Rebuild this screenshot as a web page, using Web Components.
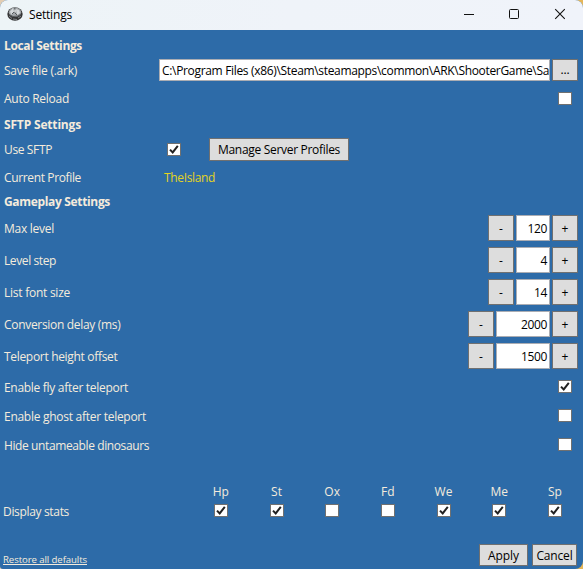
<!DOCTYPE html>
<html lang="en">
<head>
<meta charset="utf-8">
<title>Settings</title>
<style>
html,body{margin:0;height:100%;overflow:hidden}
body{background:linear-gradient(90deg,#e3cdb2 0 50%,#e6b657 50%);font:12px/16px "Open Sans","Noto Sans",sans-serif}
</style>
</head>
<body>
<settings-window></settings-window>
<script>
const define = (name, html, setup) => customElements.define(name, class extends HTMLElement {
  connectedCallback() {
    if (this.shadowRoot) return;
    this.attachShadow({mode: 'open'}).innerHTML = html;
    if (setup) setup(this, this.shadowRoot);
  }
});

/* One line of text; "w" is the advance width it is tracked to. */
define('ui-text', `<style>
:host{display:inline-block;white-space:nowrap;font-size:12px;line-height:16px;flex:none}
:host([bold]){font-weight:700}
:host([small]){font-size:9.6px;line-height:12px}
:host([small]) span{text-decoration:underline;text-underline-offset:1px}
span{display:inline-block}
</style><span><slot></slot></span>`, (el, root) => {
  const w = +el.getAttribute('w'), s = root.querySelector('span');
  if (w) s.style.letterSpacing = (w - s.getBoundingClientRect().width) / el.textContent.length + 'px';
});

define('ui-check', `<style>
:host{display:block;box-sizing:border-box;width:14px;height:13px;background:#fff;border:1px solid #707070;flex:none}
svg{display:none;width:12px;height:11px}
:host([checked]) svg{display:block}
</style><svg viewBox="0 0 12 11"><path d="M2 5.6 4.7 8.4 9.8 1.8" fill="none" stroke="#212121" stroke-width="2"/></svg>`);

define('ui-button', `<style>
:host{display:flex;box-sizing:border-box;height:22px;align-items:center;justify-content:center;background:#ddd;border:1px solid #707070;color:#000;flex:none}
:host([step]){width:26px;height:26px}
</style><slot></slot>`);

define('ui-field', `<style>
:host{display:flex;box-sizing:border-box;align-items:center;background:#fff;border:1px solid #abadb3;color:#000;overflow:hidden;height:26px;flex:none}
:host([number]){justify-content:flex-end;padding-right:2px}
</style><slot></slot>`);

define('ui-stepper', `<style>
:host{display:flex;gap:2px}
ui-button,ui-field{padding-top:2px}
</style><ui-button step><ui-text>-</ui-text></ui-button><ui-field number><ui-text></ui-text></ui-field><ui-button step><ui-text>+</ui-text></ui-button>`, (el, root) => {
  const f = root.querySelector('ui-field'), old = f.querySelector('ui-text'), t = document.createElement('ui-text');
  f.style.width = el.getAttribute('size') + 'px';
  t.textContent = el.getAttribute('value');
  t.setAttribute('w', t.textContent.length * 6.5);
  old.replaceWith(t);
});

define('setting-row', `<style>
:host{display:flex;align-items:center;box-sizing:border-box;padding:0 5px 0 4px;color:#f5ebdc}
.l{width:155px;flex:none;display:flex}
:host([low]) .l{padding-top:2px}
.c{flex:1;display:flex;align-items:center;min-width:0}
.e{display:flex;align-items:center;gap:2px}
</style><div class="l"><slot name="label"></slot></div><div class="c"><slot></slot></div><div class="e"><slot name="end"></slot></div>`);

define('stat-option', `<style>
:host{display:flex;flex-direction:column;align-items:center;gap:4px;color:#f5ebdc}
</style><ui-text></ui-text><ui-check></ui-check>`, (el, root) => {
  const t = document.createElement('ui-text');
  t.textContent = el.getAttribute('name');
  t.setAttribute('w', el.getAttribute('w'));
  root.querySelector('ui-text').replaceWith(t);
  root.querySelector('ui-check').toggleAttribute('checked', el.hasAttribute('checked'));
});

define('title-bar', `<style>
:host{display:flex;height:30px;background:linear-gradient(90deg,#edf4f7,#eff3f9 50%,#f0f3fa);color:#000;align-items:center;padding-left:7px}
.logo{width:16px;height:16px;margin:-2px 6px 0 0}
.buttons{display:flex;margin-left:auto;height:30px;padding-right:1px}
.buttons svg{width:45px;height:30px;display:block}
</style>
<svg class="logo" viewBox="0 0 16 16">
<ellipse cx="8" cy="8" rx="7.7" ry="6.7" fill="#343536"/>
<ellipse cx="8" cy="6.3" rx="6.2" ry="4.7" fill="#a4a8ab"/>
<path d="M3 5.5 6 2.3 7 6 4.2 8.7zM9 3l3 1 1 3-3 2z" fill="#d4d8da"/>
<path d="M7.8 2v5M5 8l2-2 3 3M2 8.5l4 2 5-.5 3-2" fill="none" stroke="#55595c"/>
<path d="M2 10l3 2.5M6 13l4 .5M11 12l3-2" stroke="#818486" fill="none"/>
<path d="M7.4 3.4h1.2v3H7.4z" fill="#f6f8f8"/>
</svg>
<ui-text w="43">Settings</ui-text>
<div class="buttons">
<svg viewBox="0 0 45 30"><path d="M17 14.5h10" stroke="#111"/></svg>
<svg viewBox="0 0 45 30"><rect x="17.5" y="9.5" width="9" height="9" rx="1" fill="none" stroke="#111"/></svg>
<svg viewBox="0 0 45 30"><path d="M18.2 9.2l9.6 9.6M27.8 9.2l-9.6 9.6" stroke="#111" stroke-width="1.1"/></svg>
</div>`);

define('settings-window', `<style>
:host{display:flex;flex-direction:column;box-sizing:border-box;width:583px;height:569px;background:#2d6ba8;border-radius:8px;overflow:hidden;border-bottom-left-radius:3px}
.rows{display:grid;grid-template-rows:29px 22px 35px 18px 31px 25px 22px repeat(5,32px) repeat(3,29px)}
.path{width:391px;height:22px;padding:2px 0 0 2px}
.use{margin-left:8px}
.manage{margin-left:28px;width:140px;height:23px}
.profile{margin-left:5px;color:#e4d322}
.lead{padding-top:3px}
.pad{margin-right:6px}
.flag{padding-top:2px}
.flag .pad{margin-top:-2px}
.stats{display:flex;justify-content:space-between;height:40px;margin-top:25px;padding:0 20px 0 3px;color:#f5ebdc}
.stats>ui-text{margin-top:20px}
.list{display:grid;grid-template-columns:repeat(7,55.7px);width:390px;margin-right:-20px}
.foot{display:flex;height:22px;margin-top:20px;padding:0 6px 0 3px;color:#f5ebdc}
.restore{margin:10px auto 0 0;height:12px;display:flex}
.foot ui-button+ui-button{margin-left:4px}
.foot ui-button{padding-top:1px}
</style>
<title-bar></title-bar>
<div class="rows">
<setting-row class="lead"><ui-text slot="label" bold w="78">Local Settings</ui-text></setting-row>
<setting-row low><ui-text slot="label" w="73">Save file (.ark)</ui-text><ui-field class="path"><ui-text w="387">C:\\Program Files (x86)\\Steam\\steamapps\\common\\ARK\\ShooterGame\\Sa</ui-text></ui-field><ui-button slot="end" style="width:26px"><ui-text w="9">...</ui-text></ui-button></setting-row>
<setting-row><ui-text slot="label" w="65">Auto Reload</ui-text><ui-check slot="end" class="pad"></ui-check></setting-row>
<setting-row><ui-text slot="label" bold w="77">SFTP Settings</ui-text></setting-row>
<setting-row><ui-text slot="label" w="48">Use SFTP</ui-text><ui-check class="use" checked></ui-check><ui-button class="manage"><ui-text w="122">Manage Server Profiles</ui-text></ui-button></setting-row>
<setting-row><ui-text slot="label" w="77">Current Profile</ui-text><ui-text class="profile" w="51">TheIsland</ui-text></setting-row>
<setting-row low><ui-text slot="label" bold w="106">Gameplay Settings</ui-text></setting-row>
<setting-row low><ui-text slot="label" w="50">Max level</ui-text><ui-stepper slot="end" value="120" size="34"></ui-stepper></setting-row>
<setting-row low><ui-text slot="label" w="52">Level step</ui-text><ui-stepper slot="end" value="4" size="34"></ui-stepper></setting-row>
<setting-row low><ui-text slot="label" w="66">List font size</ui-text><ui-stepper slot="end" value="14" size="34"></ui-stepper></setting-row>
<setting-row low><ui-text slot="label" w="116.5">Conversion delay (ms)</ui-text><ui-stepper slot="end" value="2000" size="54"></ui-stepper></setting-row>
<setting-row low><ui-text slot="label" w="113.5">Teleport height offset</ui-text><ui-stepper slot="end" value="1500" size="54"></ui-stepper></setting-row>
<setting-row class="flag"><ui-text slot="label" w="124">Enable fly after teleport</ui-text><ui-check slot="end" class="pad" checked></ui-check></setting-row>
<setting-row class="flag"><ui-text slot="label" w="142">Enable ghost after teleport</ui-text><ui-check slot="end" class="pad"></ui-check></setting-row>
<setting-row class="flag"><ui-text slot="label" w="145">Hide untameable dinosaurs</ui-text><ui-check slot="end" class="pad"></ui-check></setting-row>
</div>
<div class="stats"><ui-text w="66">Display stats</ui-text>
<div class="list">
<stat-option name="Hp" w="16" checked></stat-option><stat-option name="St" w="11" checked></stat-option><stat-option name="Ox" w="16"></stat-option><stat-option name="Fd" w="14"></stat-option><stat-option name="We" w="18" checked></stat-option><stat-option name="Me" w="17.5" checked></stat-option><stat-option name="Sp" w="14" checked></stat-option>
</div></div>
<div class="foot"><div class="restore"><ui-text small w="84">Restore all defaults</ui-text></div><ui-button style="width:49px"><ui-text w="31">Apply</ui-text></ui-button><ui-button style="width:45px"><ui-text w="36">Cancel</ui-text></ui-button></div>`);
</script>
</body>
</html>
